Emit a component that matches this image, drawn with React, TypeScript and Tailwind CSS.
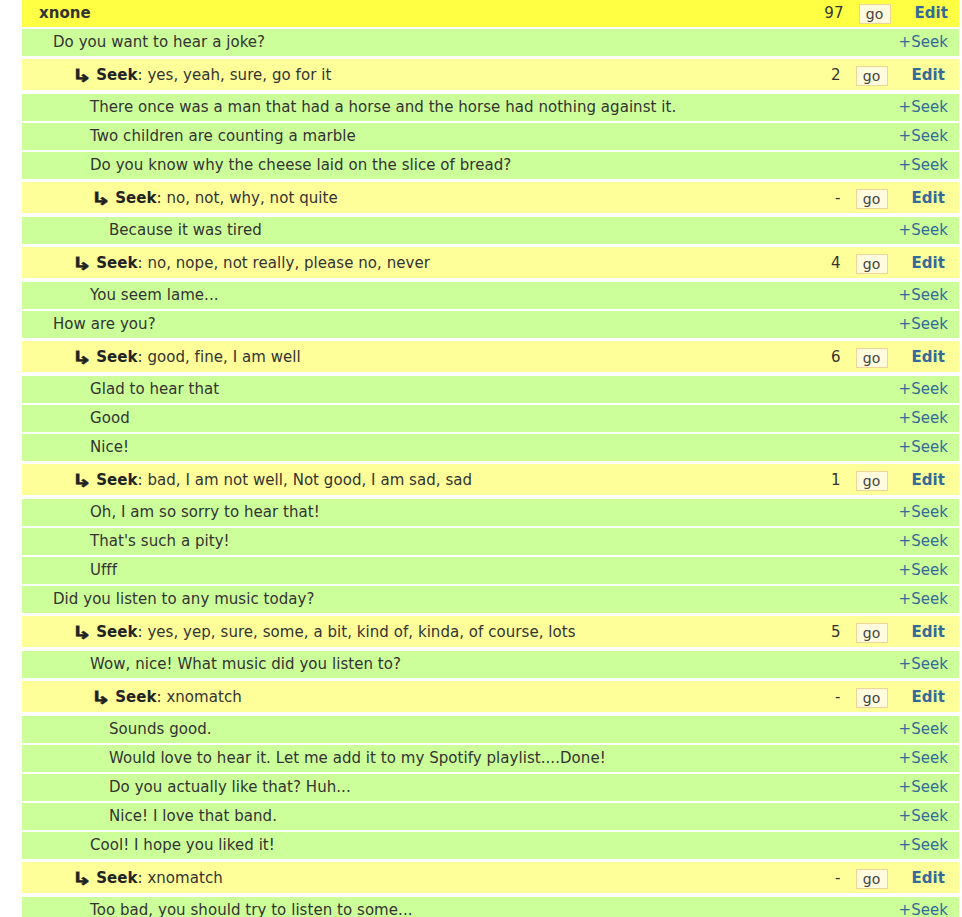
type Row =
  | { kind: "top"; text: string; count: string }
  | { kind: "say"; level: 1 | 2 | 3; text: string }
  | { kind: "seek"; level: 1 | 2; text: string; count: string };

const rows: Row[] = [
  { kind: "top", text: "xnone", count: "97" },
  { kind: "say", level: 1, text: "Do you want to hear a joke?" },
  { kind: "seek", level: 1, text: "yes, yeah, sure, go for it", count: "2" },
  { kind: "say", level: 2, text: "There once was a man that had a horse and the horse had nothing against it." },
  { kind: "say", level: 2, text: "Two children are counting a marble" },
  { kind: "say", level: 2, text: "Do you know why the cheese laid on the slice of bread?" },
  { kind: "seek", level: 2, text: "no, not, why, not quite", count: "-" },
  { kind: "say", level: 3, text: "Because it was tired" },
  { kind: "seek", level: 1, text: "no, nope, not really, please no, never", count: "4" },
  { kind: "say", level: 2, text: "You seem lame..." },
  { kind: "say", level: 1, text: "How are you?" },
  { kind: "seek", level: 1, text: "good, fine, I am well", count: "6" },
  { kind: "say", level: 2, text: "Glad to hear that" },
  { kind: "say", level: 2, text: "Good" },
  { kind: "say", level: 2, text: "Nice!" },
  { kind: "seek", level: 1, text: "bad, I am not well, Not good, I am sad, sad", count: "1" },
  { kind: "say", level: 2, text: "Oh, I am so sorry to hear that!" },
  { kind: "say", level: 2, text: "That's such a pity!" },
  { kind: "say", level: 2, text: "Ufff" },
  { kind: "say", level: 1, text: "Did you listen to any music today?" },
  { kind: "seek", level: 1, text: "yes, yep, sure, some, a bit, kind of, kinda, of course, lots", count: "5" },
  { kind: "say", level: 2, text: "Wow, nice! What music did you listen to?" },
  { kind: "seek", level: 2, text: "xnomatch", count: "-" },
  { kind: "say", level: 3, text: "Sounds good." },
  { kind: "say", level: 3, text: "Would love to hear it. Let me add it to my Spotify playlist....Done!" },
  { kind: "say", level: 3, text: "Do you actually like that? Huh..." },
  { kind: "say", level: 3, text: "Nice! I love that band." },
  { kind: "say", level: 2, text: "Cool! I hope you liked it!" },
  { kind: "seek", level: 1, text: "xnomatch", count: "-" },
  { kind: "say", level: 2, text: "Too bad, you should try to listen to some..." },
];

const sayPad = { 1: "pl-[31px]", 2: "pl-[68px]", 3: "pl-[87px]" };
const seekPad = { 1: "pl-[53px]", 2: "pl-[72px]" };

function Controls({ count }: { count: string }) {
  return (
    <div className="flex items-center">
      <span className="mr-[15px]">{count}</span>
      <button className="flex h-[20px] w-[32px] items-center justify-center border border-[#f0d59a] bg-[#fffbdc] text-[14px] leading-none text-[#444]">
        go
      </button>
      <a className="ml-[24px] font-bold text-[#336a99]">Edit</a>
    </div>
  );
}

export default function App() {
  return (
    <div className="min-h-screen bg-white font-['DejaVu_Sans',Verdana,sans-serif] text-[15px] tracking-[0.05px] text-[#333]">
      <div className="ml-[22px] flex w-[937px] flex-col">
        {rows.map((r, i) => {
          if (r.kind === "top") {
            return (
              <div key={i} className="mb-[2px] flex h-[27px] items-center justify-between bg-[#ffff44] pl-[17px] pr-[11px]">
                <span className="font-bold">{r.text}</span>
                <Controls count={r.count} />
              </div>
            );
          }
          if (r.kind === "seek") {
            return (
              <div key={i} className={`mb-[4px] mt-[1px] flex h-[31px] items-center justify-between bg-[#ffff99] pt-[2px] pr-[14px] ${seekPad[r.level]}`}>
                <span className="flex items-center">
                  <b className="-ml-[4px] mr-[10px] inline-block origin-left scale-x-[1.4] text-[18px] font-black leading-none text-[#222] [-webkit-text-stroke:0.4px_#222]">↳</b>
                  <b className="text-[#222]">Seek</b>: {r.text}
                </span>
                <Controls count={r.count} />
              </div>
            );
          }
          return (
            <div key={i} className={`mb-[2px] flex h-[27px] items-center justify-between bg-[#ccff99] pr-[11px] ${sayPad[r.level]}`}>
              <span>{r.text}</span>
              <a className="text-[#336a99]">+Seek</a>
            </div>
          );
        })}
      </div>
    </div>
  );
}
